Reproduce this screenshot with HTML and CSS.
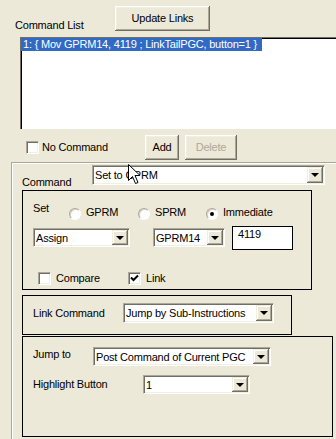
FILE: index.html
```html
<!DOCTYPE html>
<html lang="en">
<head>
    <meta charset="UTF-8">
    <title>Command Editor</title>
    <link rel="stylesheet" href="styles.css">
</head>
<body>
    <div class="dialog">
        <div class="head">
            <span class="head-label">Command List</span>
            <button class="btn btn-update">Update Links</button>
        </div>

        <div class="listbox">
            <div class="list-item selected">1: { Mov GPRM14, 4119 ; LinkTailPGC, button=1 }</div>
        </div>

        <div class="actions">
            <label class="check check-nocmd"><span class="box"></span>No Command</label>
            <button class="btn btn-add">Add</button>
            <button class="btn btn-delete" disabled>Delete</button>
        </div>

        <div class="frame">
            <div class="cmd-row">
                <span class="cmd-label">Command</span>
                <div class="combo combo-cmd"><span class="combo-text">Set to GPRM</span><span class="combo-btn"></span></div>
            </div>

            <div class="group group-set">
                <div class="set-row">
                    <span class="set-label">Set</span>
                    <label class="radio radio-gprm"><span class="dot"></span>GPRM</label>
                    <label class="radio radio-sprm"><span class="dot"></span>SPRM</label>
                    <label class="radio checked"><span class="dot"></span>Immediate</label>
                </div>
                <div class="value-row">
                    <div class="combo combo-assign"><span class="combo-text">Assign</span><span class="combo-btn"></span></div>
                    <div class="combo combo-reg"><span class="combo-text">GPRM14</span><span class="combo-btn"></span></div>
                    <div class="field">4119</div>
                </div>
                <div class="flag-row">
                    <label class="check check-compare"><span class="box"></span>Compare</label>
                    <label class="check checked"><span class="box"><svg width="9" height="9" viewBox="0 0 9 9"><path d="M1 3.5 L3.5 6 L8 1.5" fill="none" stroke="#000" stroke-width="2"/></svg></span>Link</label>
                </div>
            </div>

            <div class="group group-link">
                <span class="link-label">Link Command</span>
                <div class="combo combo-link"><span class="combo-text">Jump by Sub-Instructions</span><span class="combo-btn"></span></div>
            </div>

            <div class="group group-jump">
                <div class="jump-row">
                    <span class="jump-label">Jump to</span>
                    <div class="combo combo-jump"><span class="combo-text">Post Command of Current PGC</span><span class="combo-btn"></span></div>
                </div>
                <div class="hl-row">
                    <span class="hl-label">Highlight Button</span>
                    <div class="combo combo-hl"><span class="combo-text">1</span><span class="combo-btn"></span></div>
                </div>
            </div>
        </div>

        <!-- mouse pointer from the capture -->
        <svg class="cursor" width="13" height="21" viewBox="0 0 13 21">
            <path d="M0.5 0.5 L0.5 16.5 L4.5 12.5 L7.5 19.5 L10 18.5 L7 11.5 L12 11.5 Z" fill="#fff" stroke="#000" stroke-width="1"/>
        </svg>
    </div>
</body>
</html>
```

FILE: styles.css
```css
html,
body {
    margin: 0;
    padding: 0;
    overflow: hidden;
}

body {
    background: #ece9d8;
    font-family: "Liberation Sans", Arial, sans-serif;
    font-size: 11px;
    line-height: 13px;
    letter-spacing: -0.2px;
    color: #000;
}

.dialog {
    position: relative;
    width: 336px;
    height: 439px;
    overflow: hidden;
}

/* buttons */
.btn {
    display: block;
    box-sizing: border-box;
    height: 25px;
    padding: 0;
    border: none;
    background: #ece9d8;
    font: inherit;
    letter-spacing: inherit;
    color: #000;
    box-shadow: inset -1px -1px #716f64, inset 1px 1px #fff, inset -2px -2px #aca899, inset 2px 2px #f1efe2;
}
.btn:disabled {
    color: #aca899;
}

.head {
    display: flex;
    padding: 6px 0 0 15px;
}
.head-label {
    width: 100px;
    margin-top: 13px;
}
.btn-update {
    width: 95px;
}

.listbox {
    box-sizing: border-box;
    width: 330px;
    height: 92px;
    margin: 5px 0 0 20px;
    background: #fff;
    border-top: 1px solid #716f64;
    border-left: 1px solid #716f64;
    box-shadow: inset 1px 1px #000;
}
.list-item {
    width: 241px;
    height: 13px;
    padding-left: 2px;
    box-sizing: border-box;
    white-space: nowrap;
}
.list-item.selected {
    background: #316ac5;
    color: #fff;
}

.actions {
    display: flex;
    align-items: center;
    height: 25px;
    margin-top: 6px;
}
.check-nocmd {
    width: 119px;
    margin-left: 26px;
}
.btn-add {
    width: 34px;
}
.btn-delete {
    width: 52px;
    margin-left: 6px;
}

/* checkbox and radio */
.check {
    display: flex;
    align-items: center;
}
.check .box {
    box-sizing: border-box;
    width: 13px;
    height: 13px;
    margin-right: 3px;
    background: #fff;
    border: 1px solid;
    border-color: #aca899 #fff #fff #aca899;
    box-shadow: inset 1px 1px #716f64, inset -1px -1px #f1efe2;
    display: flex;
    align-items: center;
    justify-content: center;
}
.radio {
    display: flex;
    align-items: flex-start;
    margin-top: 4px;
}
.radio .dot {
    position: relative;
    box-sizing: border-box;
    width: 12px;
    height: 12px;
    margin: 2px 5px 0 0;
    border-radius: 50%;
    background: #fff;
    border: 1px solid;
    border-color: #aca899 #fff #fff #aca899;
    box-shadow: inset 1px 1px #d8d4c4;
}
.radio.checked .dot::after {
    content: "";
    position: absolute;
    left: 3px;
    top: 3px;
    width: 4px;
    height: 4px;
    border-radius: 50%;
    background: #000;
}

/* combo box */
.combo {
    box-sizing: border-box;
    display: flex;
    height: 20px;
    background: #fff;
    border: 1px solid;
    border-color: #aca899 #fff #fff #aca899;
    box-shadow: inset 1px 1px #716f64, inset -1px -1px #f1efe2;
    padding: 1px;
}
.combo-text {
    flex: 1;
    padding-left: 1px;
    line-height: 16px;
    white-space: nowrap;
    overflow: hidden;
}
.combo-btn {
    position: relative;
    box-sizing: border-box;
    width: 16px;
    background: #ece9d8;
    box-shadow: inset -1px -1px #716f64, inset 1px 1px #f1efe2, inset -2px -2px #aca899, inset 2px 2px #fff;
}
.combo-btn::after {
    content: "";
    position: absolute;
    left: 4px;
    top: 6px;
    border-style: solid;
    border-width: 4px 4px 0 4px;
    border-color: #000 transparent transparent transparent;
}

/* outer etched frame, runs off the right and bottom edges */
.frame {
    box-sizing: border-box;
    width: 330px;
    height: 300px;
    margin: 2px 0 0 11px;
    padding: 2px 0 0 10px;
    border-top: 1px solid #aca899;
    border-left: 1px solid #aca899;
    box-shadow: inset 1px 1px #fff;
}

.cmd-row {
    display: flex;
}
.cmd-label {
    width: 70px;
    margin-top: 11px;
}
.combo-cmd {
    width: 233px;
}

.group {
    box-sizing: border-box;
    border: 1px solid #000;
}

.group-set {
    width: 290px;
    height: 100px;
    margin-top: 1px;
    padding-left: 10px;
}
.set-row {
    display: flex;
    margin-top: 11px;
}
.set-label {
    width: 36px;
}
.radio-gprm {
    width: 69px;
}
.radio-sprm {
    width: 68px;
}

.value-row {
    display: flex;
    align-items: flex-start;
    margin-top: 6px;
}
.combo-assign {
    width: 97px;
    height: 19px;
    margin-top: 2px;
}
.combo-reg {
    width: 72px;
    height: 19px;
    margin: 2px 0 0 23px;
}
.field {
    box-sizing: border-box;
    width: 61px;
    height: 24px;
    margin-left: 7px;
    padding: 1px 0 0 5px;
    background: #fff;
    border: 1px solid #000;
}

.flag-row {
    display: flex;
    margin-top: 22px;
    padding-left: 5px;
}
.check-compare {
    width: 90px;
}
.flag-row .check .box {
    margin-right: 5px;
}

.group-link {
    display: flex;
    width: 270px;
    height: 40px;
    margin-top: 5px;
    padding: 7px 0 0 10px;
}
.link-label {
    width: 90px;
    margin-top: 4px;
}
.combo-link {
    width: 151px;
}

.group-jump {
    width: 311px;
    height: 101px;
    margin-top: 1px;
    padding: 10px 0 0 10px;
}
.jump-row,
.hl-row {
    display: flex;
}
.jump-label {
    width: 60px;
    margin-top: 1px;
}
.combo-jump {
    width: 178px;
    height: 19px;
}
.hl-row {
    margin-top: 9px;
}
.hl-label {
    width: 110px;
    margin-top: 3px;
}
.combo-hl {
    width: 107px;
    height: 19px;
}

.cursor {
    position: absolute;
    left: 128px;
    top: 164px;
}
```
